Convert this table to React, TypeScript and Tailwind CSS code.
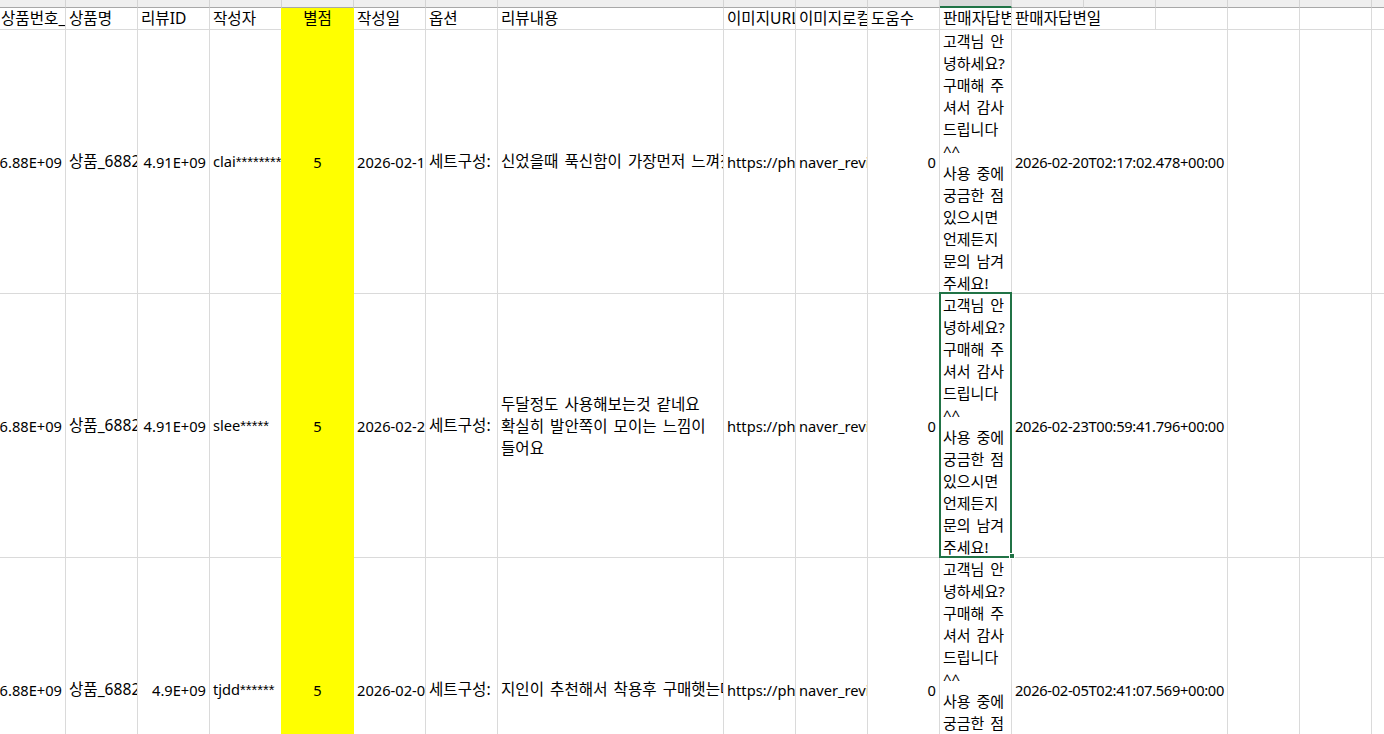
import { FC, ReactNode } from "react";
import classNames from "clsx";

const reply = [
  "고객님 안",
  "녕하세요?",
  "구매해 주",
  "셔서 감사",
  "드립니다",
  "^^",
  "사용 중에",
  "궁금한 점",
  "있으시면",
  "언제든지",
  "문의 남겨",
  "주세요!",
];

// column widths incl. the 1px right gridline (A is scrolled partly off screen)
const cols = [
  "w-[66px]",
  "w-[72px]",
  "w-[72px]",
  "w-[72px]",
  "w-[72px]",
  "w-[72px]",
  "w-[72px]",
  "w-[226px]",
  "w-[72px]",
  "w-[72px]",
  "w-[72px]",
  "w-[72px]",
  "w-[72px]",
  "w-[72px]",
  "w-[72px]",
  "w-[72px]",
  "w-[72px]",
  "w-[72px]",
];

type CellProps = {
  w: string;
  align?: "left" | "right" | "center";
  yellow?: boolean;
  yellowRight?: boolean;
  latin?: boolean;
  className?: string;
  children?: ReactNode;
};

const Cell: FC<CellProps> = ({ w, align = "left", yellow, yellowRight, latin, className, children }) => (
  <div
    className={classNames(
      "flex shrink-0 items-center overflow-hidden whitespace-nowrap border-r border-b px-[3px]",
      w,
      yellow ? "bg-[#ffff00] border-[#ffff00]" : "border-b-[#dadada]",
      !yellow && (yellowRight ? "border-r-[#ffff00]" : "border-r-[#dadada]"),
      {
        "justify-end": align === "right",
        "justify-center": align === "center",
        "text-[14.67px]": latin,
      },
      className
    )}
  >
    {children}
  </div>
);

const Lines: FC<{ lines: string[]; className?: string }> = ({ lines, className }) => (
  <div className={classNames("flex flex-col", className)}>
    {lines.map((l, i) => (
      <span key={i} className="leading-[22px]">
        {l}
      </span>
    ))}
  </div>
);

// masked user names: the asterisks are narrow in the sheet font
const Masked: FC<{ name: string; stars: number }> = ({ name, stars }) => (
  <span>
    {name}
    <span className="font-['Liberation_Sans',sans-serif]">{"*".repeat(stars)}</span>
  </span>
);

type Row = {
  id: string;
  name: string;
  stars: number;
  date: string;
  review: string[];
  reply: string;
  wrapReview?: boolean;
};

const rows: Row[] = [
  {
    id: "4.91E+09",
    name: "clai",
    stars: 9,
    date: "2026-02-19T11:20:41.000+00:00",
    review: ["신었을때 푹신함이 가장먼저 느껴졌어요 착용감 좋아요"],
    reply: "2026-02-20T02:17:02.478+00:00",
  },
  {
    id: "4.91E+09",
    name: "slee",
    stars: 5,
    date: "2026-02-22T09:12:30.000+00:00",
    review: ["두달정도 사용해보는것 같네요", "확실히 발안쪽이 모이는 느낌이", "들어요"],
    reply: "2026-02-23T00:59:41.796+00:00",
    wrapReview: true,
  },
  {
    id: "4.9E+09",
    name: "tjdd",
    stars: 6,
    date: "2026-02-04T13:05:11.000+00:00",
    review: ["지인이 추천해서 착용후 구매햇는데 만족합니다"],
    reply: "2026-02-05T02:41:07.569+00:00",
  },
];

const Empty: FC = () => (
  <>
    <Cell w="w-[72px]" />
    <Cell w="w-[72px]" />
    <Cell w="w-[72px]" />
  </>
);

export default function App() {
  return (
    <div className="relative h-[734px] w-[1384px] overflow-hidden bg-white font-['Noto_Sans','Noto_Sans_CJK_KR',sans-serif] text-[15.6px] text-black [word-spacing:2px]">
      {/* column letter strip, scrolled almost out of view */}
      <div className="flex h-[8px]">
        {cols.map((w, i) => (
          <div
            key={i}
            className={classNames(
              "shrink-0 border-r border-r-[#d4d4d4]",
              w,
              i === 11
                ? "border-b-2 border-b-[#217346] bg-[#dadada]"
                : "border-b border-b-[#a8a8a8] bg-[#efefef]"
            )}
          />
        ))}
      </div>

      {/* header row */}
      <div className="flex h-[22px]">
        <Cell w="w-[66px]" className="pl-[1px]">상품번호_원본</Cell>
        <Cell w="w-[72px]">상품명</Cell>
        <Cell w="w-[72px]">리뷰ID</Cell>
        <Cell w="w-[72px]" yellowRight>작성자</Cell>
        <Cell w="w-[72px]" align="center" yellow>별점</Cell>
        <Cell w="w-[72px]">작성일</Cell>
        <Cell w="w-[72px]">옵션</Cell>
        <Cell w="w-[226px]">리뷰내용</Cell>
        <Cell w="w-[72px]">이미지URL</Cell>
        <Cell w="w-[72px]">이미지로컬경로</Cell>
        <Cell w="w-[72px]">도움수</Cell>
        <Cell w="w-[72px]">판매자답변</Cell>
        <Cell w="w-[144px]">판매자답변일</Cell>
        <Empty />
        <Cell w="w-[72px]" />
      </div>

      {rows.map((r, i) => (
        <div key={i} className="flex h-[264px]">
          <Cell w="w-[66px]" align="right" latin>6.88E+09</Cell>
          <Cell w="w-[72px]">상품_68821034</Cell>
          <Cell w="w-[72px]" align="right" latin>{r.id}</Cell>
          <Cell w="w-[72px]" yellowRight latin>
            <Masked name={r.name} stars={r.stars} />
          </Cell>
          <Cell w="w-[72px]" align="center" yellow latin>5</Cell>
          <Cell w="w-[72px]" latin>{r.date}</Cell>
          <Cell w="w-[72px]">세트구성:&nbsp;&nbsp;블랙 1+1</Cell>
          <Cell w="w-[226px]">
            {r.wrapReview ? <Lines lines={r.review} /> : r.review[0]}
          </Cell>
          <Cell w="w-[72px]" latin>https://phinf.pstatic.net/review</Cell>
          <Cell w="w-[72px]" latin>naver_review_{i + 1}.jpg</Cell>
          <Cell w="w-[72px]" align="right" latin>0</Cell>
          <Cell w="w-[72px]">
            <Lines lines={reply} className="text-[15px]" />
          </Cell>
          <Cell w="w-[216px]" latin className="tracking-[-0.3px]">{r.reply}</Cell>
          <Empty />
        </div>
      ))}

      {/* active cell */}
      <div className="pointer-events-none absolute left-[939px] top-[292px] h-[266px] w-[73px] border-2 border-[#217346]" />
      <div className="pointer-events-none absolute left-[1009px] top-[553px] h-[6px] w-[6px] border border-white bg-[#217346]" />
    </div>
  );
}
